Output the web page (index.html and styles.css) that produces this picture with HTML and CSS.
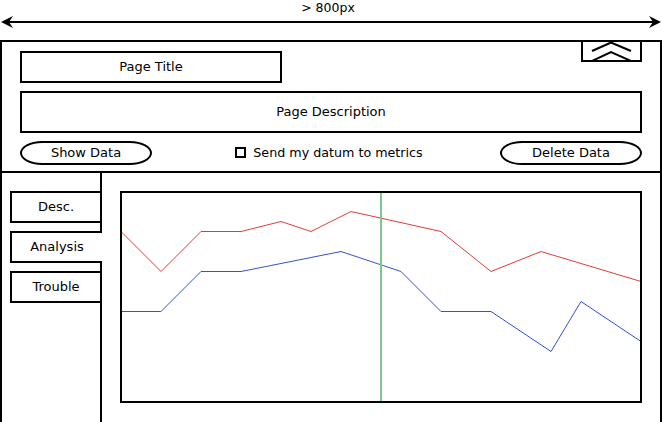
FILE: index.html
```html
<!DOCTYPE html>
<html lang="en">

<head>
  <meta charset="UTF-8">
  <title>Wireframe - Data Page</title>
  <link rel="stylesheet" href="styles.css">
</head>

<body>

  <div class="ruler">
    <span class="ruler-label">&gt; 800px</span>
    <svg class="ruler-arrow" width="662" height="14" viewBox="0 0 662 14">
      <line x1="6" y1="7" x2="656" y2="7" stroke="#000" stroke-width="2"/>
      <path d="M1 7 L13 1 L9 7 L13 13 Z" fill="#000"/>
      <path d="M661 7 L649 1 L653 7 L649 13 Z" fill="#000"/>
    </svg>
  </div>

  <div class="frame">
    <button class="collapse" type="button">
      <svg width="57" height="18" viewBox="0 0 57 18">
        <polyline points="9,9 28,0.5 48,9" fill="none" stroke="#000" stroke-width="2"/>
        <polyline points="9,19 28,10 48,19" fill="none" stroke="#000" stroke-width="2"/>
      </svg>
    </button>

    <header class="top">
      <div class="title-box">Page Title</div>
      <div class="desc-box">Page Description</div>
      <div class="actions">
        <button class="pill" type="button">Show Data</button>
        <label class="check"><span class="check-box"></span>Send my datum to metrics</label>
        <button class="pill wide" type="button">Delete Data</button>
      </div>
    </header>

    <div class="lower">
      <nav class="tabs">
        <div class="tab">Desc.</div>
        <div class="tab active">Analysis</div>
        <div class="tab">Trouble</div>
      </nav>

      <main class="content">
        <div class="chart">
          <svg width="518" height="208" viewBox="122 193 518 208">
            <polyline fill="none" stroke="#e03c3c" stroke-width="1"
              points="121,231.5 161,271.5 201,231.5 241,231.5 281,221.5 311,231.5 351,211.5 441,231.5 491,271.5 541,251.5 641,281.5"/>
            <polyline fill="none" stroke="#3352cc" stroke-width="1"
              points="121,311.5 161,311.5 201,271.5 241,271.5 341,251.5 401,271.5 441,311.5 491,311.5 551,351.5 581,301.5 641,341.5"/>
            <line x1="381" y1="193" x2="381" y2="401" stroke="#7cc98c" stroke-width="2"/>
          </svg>
        </div>
      </main>
    </div>
  </div>

</body>
</html>
```

FILE: styles.css
```css
html, body {
  margin: 0;
  padding: 0;
  overflow: hidden;
}
body {
  font-family: 'DejaVu Sans', sans-serif;
  font-size: 13px;
  color: #000;
  background: #fff;
  width: 662px;
  height: 422px;
}
.ruler {
  height: 40px;
  display: flex;
  flex-direction: column;
}
.ruler-label {
  display: block;
  text-align: center;
  font-size: 12.5px;
  line-height: 15px;
  padding-right: 6px;
}
.ruler-arrow {
  display: block;
}
.frame {
  position: relative;
  box-sizing: border-box;
  width: 662px;
  height: 382px;
  border: 2px solid #000;
  border-bottom: none;
  display: flex;
  flex-direction: column;
}
.collapse {
  position: absolute;
  top: -2px;
  left: 579px;
  box-sizing: border-box;
  width: 61px;
  height: 22px;
  padding: 0;
  border: 2px solid #000;
  background: #fff;
  display: flex;
  align-items: flex-start;
  justify-content: center;
}
.collapse svg {
  display: block;
}
.top {
  padding: 9px 18px 6px 18px;
  border-bottom: 2px solid #000;
  display: flex;
  flex-direction: column;
  gap: 8px;
}
.title-box, .desc-box {
  box-sizing: border-box;
  border: 2px solid #000;
  display: flex;
  align-items: center;
  justify-content: center;
  padding-bottom: 2px;
}
.title-box {
  width: 262px;
  height: 32px;
}
.desc-box {
  width: 622px;
  height: 42px;
}
.actions {
  display: flex;
  align-items: center;
  justify-content: space-between;
  width: 622px;
  height: 24px;
}
.pill {
  box-sizing: border-box;
  width: 132px;
  height: 24px;
  padding: 0 0 2px 0;
  border: 2px solid #000;
  border-radius: 22px / 12px;
  background: #fff;
  font-family: inherit;
  font-size: 13px;
  color: #000;
}
.pill.wide {
  width: 142px;
}
.check {
  display: flex;
  align-items: center;
  gap: 7px;
  margin-left: 6px;
  font-size: 12.7px;
  padding-bottom: 2px;
}
.check-box {
  box-sizing: border-box;
  width: 11px;
  height: 11px;
  border: 2px solid #000;
  margin-top: 1px;
}
.lower {
  flex: 1;
  display: flex;
}
.tabs {
  box-sizing: border-box;
  width: 100px;
  border-right: 2px solid #000;
  padding-top: 18px;
  display: flex;
  flex-direction: column;
  gap: 8px;
}
.tab {
  box-sizing: border-box;
  height: 32px;
  margin-left: 8px;
  margin-right: -2px;
  border: 2px solid #000;
  display: flex;
  align-items: center;
  justify-content: center;
  padding-bottom: 2px;
}
.tab.active {
  position: relative;
  border-right: none;
  background: #fff;
}
.content {
  flex: 1;
  padding: 18px 0 0 18px;
}
.chart {
  box-sizing: border-box;
  width: 522px;
  height: 212px;
  border: 2px solid #000;
}
.chart svg {
  display: block;
}
```
